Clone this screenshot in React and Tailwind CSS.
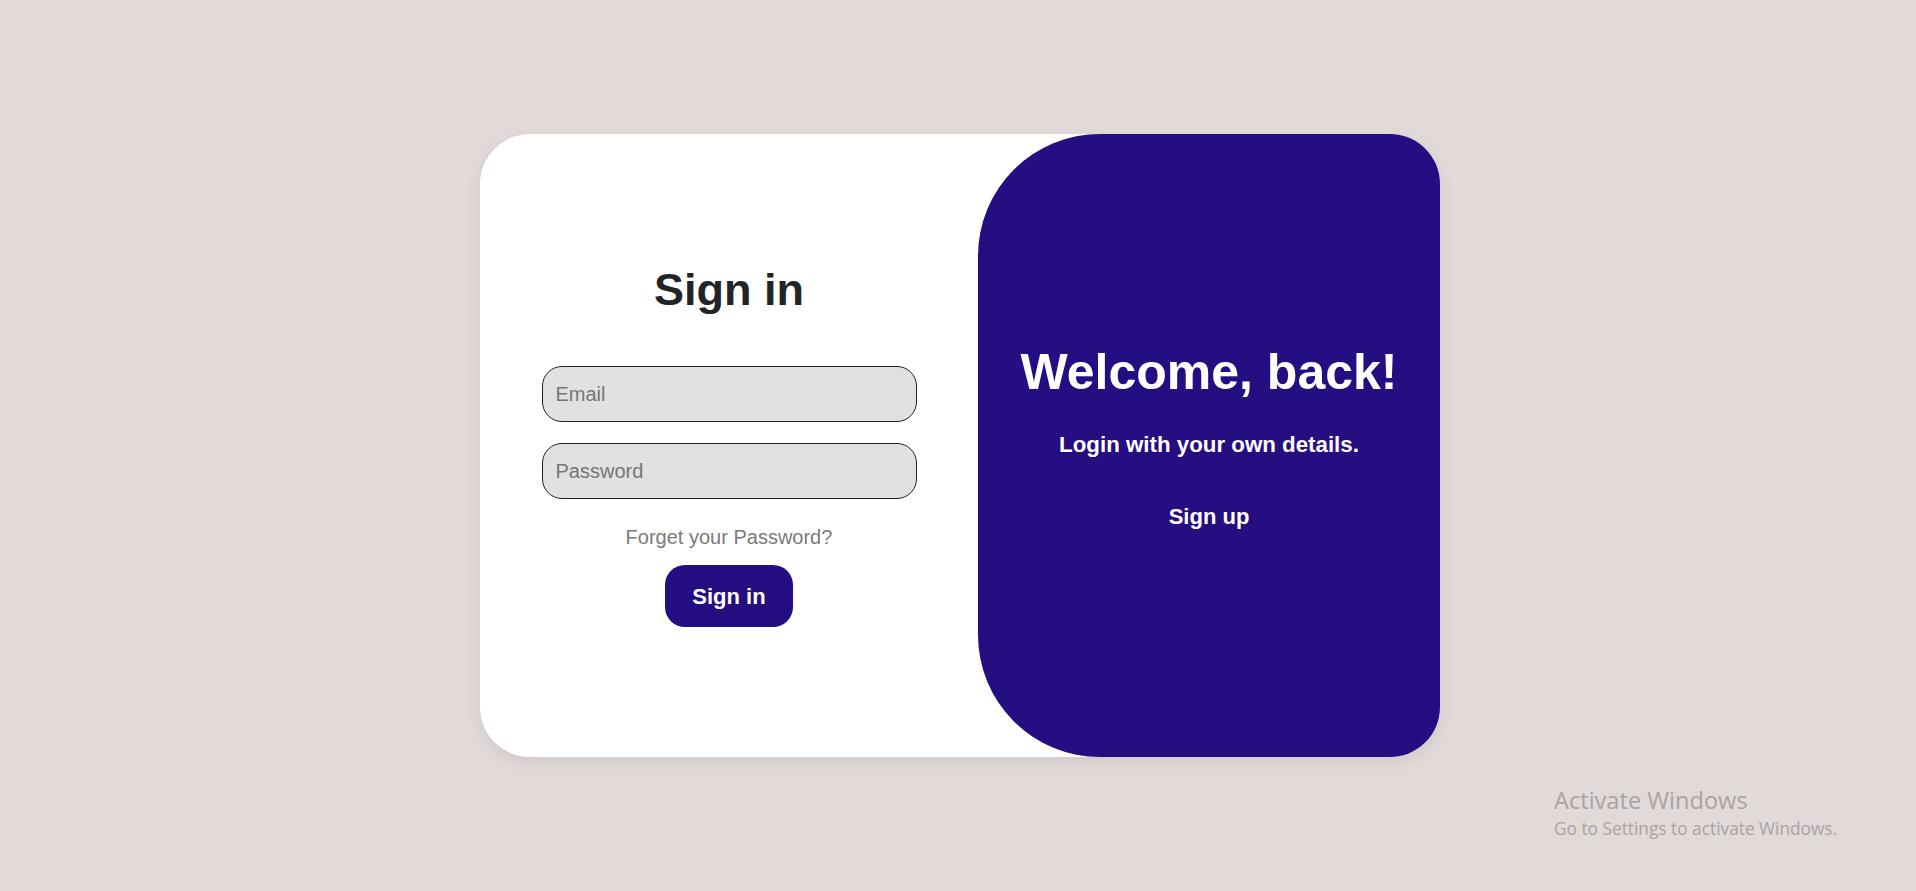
import React from 'react';

const font = { fontFamily: '"Liberation Sans", Arial, sans-serif' };

const SignInForm = () => {
    return (
        <div className="flex-1 flex flex-col items-center justify-center">
            <h1 className="text-[45px] leading-[52px] font-bold text-[#212529]">Sign in</h1>

            <input
                type="email"
                placeholder="Email"
                className="mt-[50px] w-[375px] h-[56px] px-[13px] rounded-[20px] border border-[#222] bg-[#e2e1e0] text-[20px] placeholder:text-[#757575] outline-none"
            />
            <input
                type="password"
                placeholder="Password"
                className="mt-[21px] w-[375px] h-[56px] px-[13px] rounded-[20px] border border-[#222] bg-[#e2e1e0] text-[20px] placeholder:text-[#757575] outline-none"
            />

            <a href="#" className="mt-[27px] text-[20px] leading-[23px] text-[#7a7a7a]">
                Forget your Password?
            </a>

            <button className="mt-[16px] w-[128px] h-[62px] rounded-[20px] bg-[#250d82] text-white text-[22px] font-bold">
                Sign in
            </button>
        </div>
    );
};

const WelcomePanel = () => {
    return (
        <div className="w-[462px] bg-[#250d82] rounded-l-[122px] flex flex-col items-center justify-center pb-[19px] text-white">
            <h2 className="text-[50px] leading-[57px] font-bold">Welcome, back!</h2>
            <p className="mt-[31px] text-[22.3px] leading-[25px] font-bold">Login with your own details.</p>
            <button className="mt-[47px] text-[22px] leading-[25px] font-bold">Sign up</button>
        </div>
    );
};

export default function App() {
    return (
        <div style={font} className="relative w-full h-[891px] bg-[#e2d9d9] flex items-center justify-center pl-1">
            <div className="w-[960px] h-[623px] bg-white rounded-[50px] overflow-hidden flex shadow-[0_5px_15px_rgba(0,0,0,0.08)]">
                <SignInForm />
                <WelcomePanel />
            </div>

            <div
                className="absolute left-[1554px] top-[787px] text-[#aaa3a3] pointer-events-none"
                style={{ fontFamily: '"Open Sans", "Noto Sans", sans-serif' }}
            >
                <p className="text-[23.6px] leading-[26px]">Activate Windows</p>
                <p className="text-[17.3px] leading-[20px] mt-[6px]">Go to Settings to activate Windows.</p>
            </div>
        </div>
    );
}
